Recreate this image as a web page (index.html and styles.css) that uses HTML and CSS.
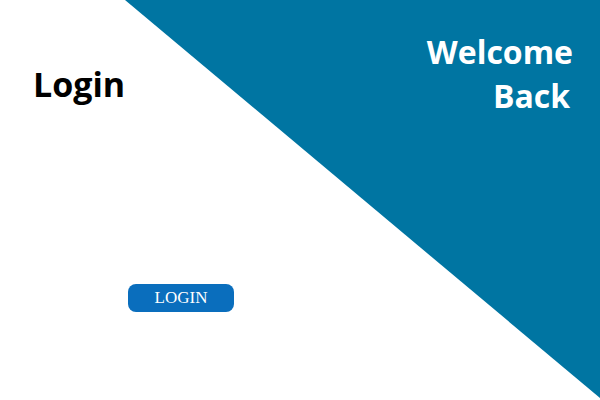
FILE: index.html
```html
<!DOCTYPE html>
<html>
<head>
<meta charset="utf-8">
<link rel="stylesheet" href="styles.css">
</head>
<body>
<div class="page">
  <div class="backdrop"></div>
  <section class="form-side">
    <h1 class="title">Login</h1>
    <button class="login-btn">LOGIN</button>
  </section>
  <section class="welcome-side">
    <h2 class="welcome">Welcome<br><span class="welcome-last">Back</span></h2>
  </section>
</div>
</body>
</html>
```
FILE: styles.css
```css
html, body {
  margin: 0;
  padding: 0;
  background: #ffffff;
}
.page {
  position: relative;
  width: 600px;
  height: 400px;
  overflow: hidden;
  display: flex;
  justify-content: space-between;
  font-family: "Open Sans", "Noto Sans", sans-serif;
}
.backdrop {
  position: absolute;
  inset: 0;
  background: #0075a2;
  clip-path: polygon(125px 0, 600px 0, 600px 398px);
}
.form-side {
  position: relative;
  width: 300px;
  padding: 60px 0 0 33px;
  display: flex;
  flex-direction: column;
}
.title {
  margin: 0;
  font-size: 34px;
  font-weight: 700;
  line-height: 48px;
  color: #000;
}
.login-btn {
  margin: 176px 0 0 95px;
  width: 106px;
  height: 28px;
  border: none;
  border-radius: 8px;
  background: #0a6ebd;
  color: #fff;
  font-family: "Liberation Serif", serif;
  font-size: 17px;
  padding: 0;
}
.welcome-side {
  position: relative;
  padding: 30px 27px 0 0;
}
.welcome {
  margin: 0;
  text-align: right;
  font-size: 32px;
  font-weight: 700;
  line-height: 44px;
  color: #fff;
}
.welcome-last {
  padding-right: 3px;
}
```
